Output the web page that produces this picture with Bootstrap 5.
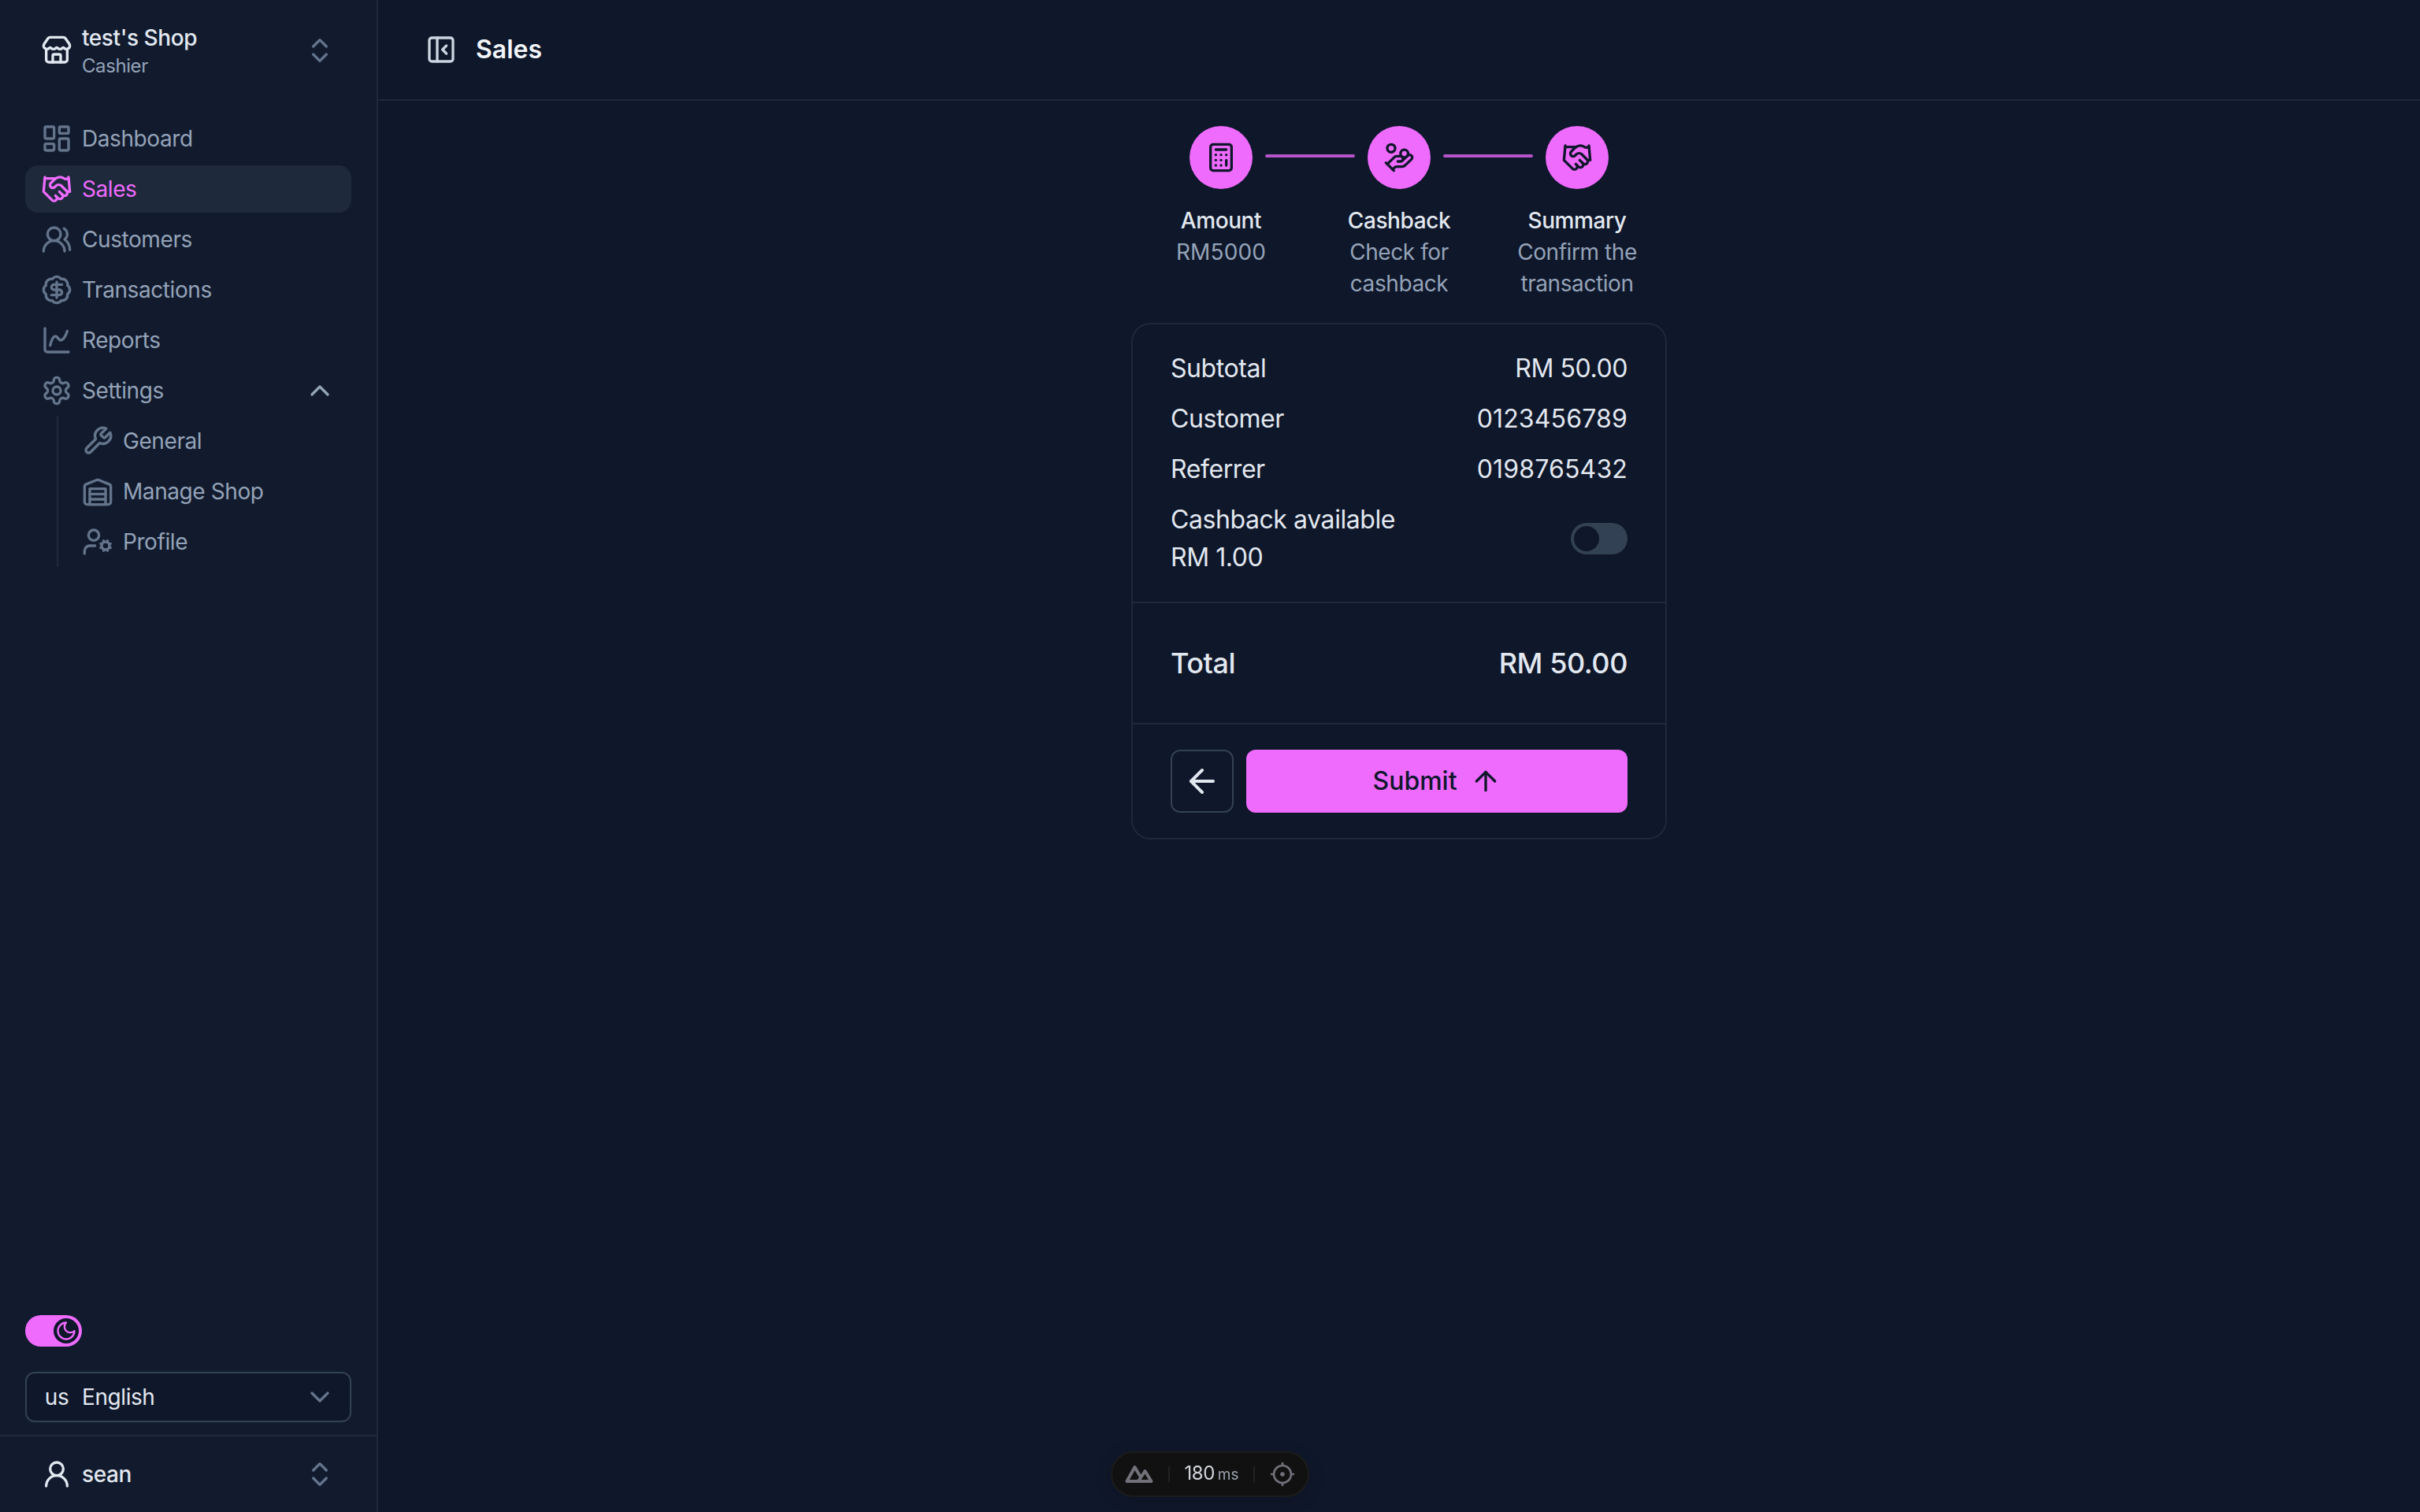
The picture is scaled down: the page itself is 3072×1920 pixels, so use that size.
<!DOCTYPE html>
<html lang="en">
<head>
  <meta charset="UTF-8">
  <title>Sales</title>
  <link href="https://cdn.jsdelivr.net/npm/bootstrap@5.3.0/dist/css/bootstrap.min.css" rel="stylesheet">
  <style>
    html, body { height: 100%; }
    body { background: #0f172a; color: #e2e8f0; font-family: "Inter", "Liberation Sans", sans-serif; font-size: 28px; line-height: 40px; letter-spacing: -.015em; overflow: hidden; }
    .ico { width: 40px; height: 40px; flex: none; fill: none; stroke: currentColor; stroke-width: 2; stroke-linecap: round; stroke-linejoin: round; }
    .ico-48 { width: 48px; height: 48px; }
    .ico-28 { width: 28px; height: 28px; }
    .num-wide { letter-spacing: .005em; }

    .side-bar { width: 480px; flex: none; background: #121b2e; border-right: 2px solid #1e293b; }
    .shop-head { height: 128px; padding: 0 20px 0 52px; margin-bottom: 18px; }
    .shop-name { font-weight: 500; line-height: 40px; color: #e2e8f0; }
    .shop-role { font-size: 24px; line-height: 32px; color: #94a3b8; }
    .shop-text { margin-top: -1px; }
    .shop-caret { margin-right: 32px; }
    .side-list { padding: 0 32px; gap: 4px; }
    .side-link { height: 60px; padding: 0 20px 0 20px; gap: 12px; color: #94a3b8; border-radius: 16px; text-decoration: none; }
    .side-link .ico { color: #64748b; }
    .side-link.on { background: #1e293b; color: #ee6bfd; }
    .side-link.on .ico { color: #ee6bfd; }
    .side-link .ico.chev { color: #94a3b8; }
    .sub-list { margin: -2px 0 0 40px; padding: 2px 0; border-left: 2px solid #1e293b; gap: 4px; }
    .sub-list .side-link { padding-left: 30px; }
    .chev-dim { color: #64748b; }

    .theme-pill { width: 72px; height: 40px; background: #ee6bfd; border-radius: 20px; padding: 4px; margin: 0 32px 32px; justify-content: flex-end; }
    .theme-knob { width: 32px; height: 32px; border-radius: 50%; background: #0f172a; color: #ee6bfd; }
    .lang-pick { height: 64px; margin: 0 32px 16px; padding: 0 18px 0 18px; gap: 12px; background: #0f172a; border: 2px solid #334155; border-radius: 12px; color: #e2e8f0; }
    .lang-flag { width: 40px; text-align: center; }
    .user-row { height: 98px; padding: 0 52px 0 52px; gap: 12px; border-top: 2px solid #1e293b; font-weight: 500; color: #e2e8f0; }

    .top-bar { height: 128px; padding-left: 60px; gap: 24px; border-bottom: 2px solid #1e293b; font-size: 32px; font-weight: 600; color: #f1f5f9; flex: none; letter-spacing: 0; }
    .top-bar .ico { color: #cbd5e1; }

    .sale-col { width: 680px; padding-top: 32px; }
    .step-dots { padding: 0 74px; }
    .step-dot { width: 80px; height: 80px; flex: none; border-radius: 50%; background: #ee6bfd; color: #0f172a; }
    .step-line { flex: 1 1 0; height: 4px; margin: 0 16px 4px; border-radius: 2px; background: #b654cc; }
    .step-labels { margin-top: 20px; margin-bottom: 30px; text-align: center; display: grid; grid-template-columns: repeat(3, 226px); justify-content: center; }
    .step-labels b { display: block; font-weight: 500; color: #e2e8f0; }
    .step-labels span { display: block; color: #94a3b8; padding: 0 24px; }

    .sale-card { background: transparent; border: 2px solid #1e293b; border-radius: 24px; font-size: 32px; line-height: 48px; color: #e2e8f0; }
    .sale-rows { padding: 32px 48px; gap: 16px; }
    .sale-total { padding: 48px; border-top: 2px solid #1e293b; border-bottom: 2px solid #1e293b; font-size: 36px; line-height: 56px; font-weight: 500; }
    .sale-actions { padding: 32px 48px; gap: 16px; }
    .cash-switch { width: 72px; height: 40px; padding: 4px; background: #334155; border-radius: 20px; }
    .cash-switch i { display: block; width: 32px; height: 32px; border-radius: 50%; background: #0f172a; }
    .back-btn { width: 80px; height: 80px; padding: 0; border: 2px solid #334155; border-radius: 12px; color: #e2e8f0; background: transparent; }
    .submit-btn { height: 80px; gap: 16px; border: 0; border-radius: 12px; background: #ee6bfd; color: #0f172a; font-size: 32px; font-weight: 500; letter-spacing: 0; }

    .dev-pill { position: fixed; left: 1410px; bottom: 19px; width: 252px; height: 58px; background: #111; border: 2px solid #1c1c1c; border-radius: 29px; color: #d1d5db; box-shadow: 0 4px 20px rgba(0,0,0,.15); }
    .dev-sep { width: 2px; height: 20px; background: #232323; }
    .dev-time { font-size: 24px; letter-spacing: -.5px; }
    .dev-time small { font-size: 19px; color: #9ca3af; margin-left: 4px; letter-spacing: 0; }
  </style>
</head>
<body class="d-flex">
  <svg class="d-none">
    <symbol id="store" viewBox="0 0 24 24"><path d="M15 21v-5a1 1 0 0 0-1-1h-4a1 1 0 0 0-1 1v5"/><path d="M17.774 10.31a1.12 1.12 0 0 0-1.549 0 2.5 2.5 0 0 1-3.451 0 1.12 1.12 0 0 0-1.548 0 2.5 2.5 0 0 1-3.452 0 1.12 1.12 0 0 0-1.549 0 2.5 2.5 0 0 1-3.77-3.248l2.889-4.184A2 2 0 0 1 7 2h10a2 2 0 0 1 1.653.873l2.895 4.192a2.5 2.5 0 0 1-3.774 3.244"/><path d="M4 10.95V19a2 2 0 0 0 2 2h12a2 2 0 0 0 2-2v-8.05"/></symbol>
    <symbol id="updown" viewBox="0 0 24 24"><path d="m7 15 5 5 5-5"/><path d="m7 9 5-5 5 5"/></symbol>
    <symbol id="dash" viewBox="0 0 24 24"><rect width="7" height="9" x="3" y="3" rx="1"/><rect width="7" height="5" x="14" y="3" rx="1"/><rect width="7" height="9" x="14" y="12" rx="1"/><rect width="7" height="5" x="3" y="16" rx="1"/></symbol>
    <symbol id="hands" viewBox="0 0 24 24"><path d="m11 17 2 2a1 1 0 1 0 3-3"/><path d="m14 14 2.5 2.5a1 1 0 1 0 3-3l-3.88-3.88a3 3 0 0 0-4.24 0l-.88.88a1 1 0 1 1-3-3l2.81-2.81a5.79 5.79 0 0 1 7.06-.87l.47.28a2 2 0 0 0 1.42.25L21 4"/><path d="m21 3 1 11h-2"/><path d="M3 3 2 14l6.5 6.5a1 1 0 1 0 3-3"/><path d="M3 4h8"/></symbol>
    <symbol id="users" viewBox="0 0 24 24"><path d="M18 21a8 8 0 0 0-16 0"/><circle cx="10" cy="8" r="5"/><path d="M22 20c0-3.37-2-6.5-4-8a5 5 0 0 0-.45-8.3"/></symbol>
    <symbol id="badge" viewBox="0 0 24 24"><path d="M3.85 8.62a4 4 0 0 1 4.78-4.77 4 4 0 0 1 6.74 0 4 4 0 0 1 4.78 4.78 4 4 0 0 1 0 6.74 4 4 0 0 1-4.77 4.78 4 4 0 0 1-6.75 0 4 4 0 0 1-4.78-4.77 4 4 0 0 1 0-6.76Z"/><path d="M16 8h-6a2 2 0 1 0 0 4h4a2 2 0 1 1 0 4H8"/><path d="M12 18V6"/></symbol>
    <symbol id="spline" viewBox="0 0 24 24"><path d="M3 3v16a2 2 0 0 0 2 2h16"/><path d="M7 16c.5-2 1.5-7 4-7 2 0 2 3 4 3 2.5 0 4.5-5 5-7"/></symbol>
    <symbol id="gear" viewBox="0 0 24 24"><path d="M12.22 2h-.44a2 2 0 0 0-2 2v.18a2 2 0 0 1-1 1.73l-.43.25a2 2 0 0 1-2 0l-.15-.08a2 2 0 0 0-2.73.73l-.22.38a2 2 0 0 0 .73 2.73l.15.1a2 2 0 0 1 1 1.72v.51a2 2 0 0 1-1 1.74l-.15.09a2 2 0 0 0-.73 2.73l.22.38a2 2 0 0 0 2.73.73l.15-.08a2 2 0 0 1 2 0l.43.25a2 2 0 0 1 1 1.73V20a2 2 0 0 0 2 2h.44a2 2 0 0 0 2-2v-.18a2 2 0 0 1 1-1.73l.43-.25a2 2 0 0 1 2 0l.15.08a2 2 0 0 0 2.73-.73l.22-.39a2 2 0 0 0-.73-2.73l-.15-.08a2 2 0 0 1-1-1.74v-.5a2 2 0 0 1 1-1.74l.15-.09a2 2 0 0 0 .73-2.73l-.22-.38a2 2 0 0 0-2.73-.73l-.15.08a2 2 0 0 1-2 0l-.43-.25a2 2 0 0 1-1-1.73V4a2 2 0 0 0-2-2z"/><circle cx="12" cy="12" r="3"/></symbol>
    <symbol id="up" viewBox="0 0 24 24"><path d="m18 15-6-6-6 6"/></symbol>
    <symbol id="down" viewBox="0 0 24 24"><path d="m6 9 6 6 6-6"/></symbol>
    <symbol id="wrench" viewBox="0 0 24 24"><path d="M14.7 6.3a1 1 0 0 0 0 1.4l1.6 1.6a1 1 0 0 0 1.4 0l3.77-3.77a6 6 0 0 1-7.94 7.94l-6.91 6.91a2.12 2.12 0 0 1-3-3l6.91-6.91a6 6 0 0 1 7.94-7.94l-3.76 3.76z"/></symbol>
    <symbol id="warehouse" viewBox="0 0 24 24"><path d="M22 8.35V20a2 2 0 0 1-2 2H4a2 2 0 0 1-2-2V8.35A2 2 0 0 1 3.26 6.5l8-3.2a2 2 0 0 1 1.48 0l8 3.2A2 2 0 0 1 22 8.35Z"/><path d="M6 18h12"/><path d="M6 14h12"/><rect width="12" height="12" x="6" y="10"/></symbol>
    <symbol id="usercog" viewBox="0 0 24 24"><path d="M10 15H6a4 4 0 0 0-4 4v2"/><path d="m14.305 16.53.923-.382"/><path d="m15.228 13.852-.923-.383"/><path d="m16.852 12.228-.383-.923"/><path d="m16.852 17.772-.383.924"/><path d="m19.148 12.228.383-.923"/><path d="m19.53 18.696-.382-.924"/><path d="m20.772 13.852.924-.383"/><path d="m20.772 16.148.924.383"/><circle cx="18" cy="15" r="3"/><circle cx="9" cy="7" r="4"/></symbol>
    <symbol id="moon" viewBox="0 0 24 24"><path d="M12 3a6 6 0 0 0 9 9 9 9 0 1 1-9-9Z"/></symbol>
    <symbol id="user" viewBox="0 0 24 24"><circle cx="12" cy="8" r="5"/><path d="M20 21a8 8 0 0 0-16 0"/></symbol>
    <symbol id="panel" viewBox="0 0 24 24"><rect width="18" height="18" x="3" y="3" rx="2"/><path d="M9 3v18"/><path d="m16 15-3-3 3-3"/></symbol>
    <symbol id="calc" viewBox="0 0 24 24"><rect width="16" height="20" x="4" y="2" rx="2"/><path d="M8 6h8"/><path d="M16 14v4"/><path d="M16 10h.01"/><path d="M12 10h.01"/><path d="M8 10h.01"/><path d="M12 14h.01"/><path d="M8 14h.01"/><path d="M12 18h.01"/><path d="M8 18h.01"/></symbol>
    <symbol id="coins" viewBox="0 0 24 24"><path d="M11 15h2a2 2 0 1 0 0-4h-3c-.6 0-1.1.2-1.4.6L3 17"/><path d="m7 21 1.6-1.4c.3-.4.8-.6 1.4-.6h4c1.1 0 2.1-.4 2.8-1.2l4.6-4.4a2 2 0 0 0-2.75-2.91l-4.2 3.9"/><path d="m2 16 6 6"/><circle cx="16" cy="9" r="2.9"/><circle cx="6" cy="5" r="3"/></symbol>
    <symbol id="left" viewBox="0 0 24 24"><path d="m12 19-7-7 7-7"/><path d="M19 12H5"/></symbol>
    <symbol id="arrowup" viewBox="0 0 24 24"><path d="m5 12 7-7 7 7"/><path d="M12 19V5"/></symbol>
  </svg>

  <aside class="side-bar d-flex flex-column">
    <div class="shop-head d-flex align-items-center justify-content-between">
      <div class="d-flex align-items-center gap-2">
        <svg class="ico me-1"><use href="#store"/></svg>
        <div class="shop-text">
          <div class="shop-name">test's Shop</div>
          <div class="shop-role">Cashier</div>
        </div>
      </div>
      <svg class="ico chev-dim shop-caret"><use href="#updown"/></svg>
    </div>

    <nav class="side-list d-flex flex-column">
      <a class="side-link d-flex align-items-center" href="#"><svg class="ico"><use href="#dash"/></svg>Dashboard</a>
      <a class="side-link on d-flex align-items-center" href="#"><svg class="ico"><use href="#hands"/></svg>Sales</a>
      <a class="side-link d-flex align-items-center" href="#"><svg class="ico"><use href="#users"/></svg>Customers</a>
      <a class="side-link d-flex align-items-center" href="#"><svg class="ico"><use href="#badge"/></svg>Transactions</a>
      <a class="side-link d-flex align-items-center" href="#"><svg class="ico"><use href="#spline"/></svg>Reports</a>
      <a class="side-link d-flex align-items-center" href="#"><svg class="ico"><use href="#gear"/></svg>Settings<svg class="ico chev ms-auto"><use href="#up"/></svg></a>
      <div class="sub-list d-flex flex-column">
        <a class="side-link d-flex align-items-center" href="#"><svg class="ico"><use href="#wrench"/></svg>General</a>
        <a class="side-link d-flex align-items-center" href="#"><svg class="ico"><use href="#warehouse"/></svg>Manage Shop</a>
        <a class="side-link d-flex align-items-center" href="#"><svg class="ico"><use href="#usercog"/></svg>Profile</a>
      </div>
    </nav>

    <div class="mt-auto">
      <div class="theme-pill d-flex">
        <div class="theme-knob d-flex align-items-center justify-content-center"><svg class="ico ico-28"><use href="#moon"/></svg></div>
      </div>
      <div class="lang-pick d-flex align-items-center">
        <span class="lang-flag">us</span>
        <span>English</span>
        <svg class="ico chev-dim ms-auto"><use href="#down"/></svg>
      </div>
      <div class="user-row d-flex align-items-center">
        <svg class="ico"><use href="#user"/></svg>
        <span>sean</span>
        <svg class="ico chev-dim ms-auto"><use href="#updown"/></svg>
      </div>
    </div>
  </aside>

  <main class="flex-grow-1 d-flex flex-column">
    <header class="top-bar d-flex align-items-center">
      <svg class="ico"><use href="#panel"/></svg>
      <span>Sales</span>
    </header>

    <div class="sale-col mx-auto">
      <div class="step-dots d-flex align-items-center">
        <div class="step-dot d-flex align-items-center justify-content-center"><svg class="ico"><use href="#calc"/></svg></div>
        <div class="step-line"></div>
        <div class="step-dot d-flex align-items-center justify-content-center"><svg class="ico"><use href="#coins"/></svg></div>
        <div class="step-line"></div>
        <div class="step-dot d-flex align-items-center justify-content-center"><svg class="ico"><use href="#hands"/></svg></div>
      </div>
      <div class="step-labels">
        <div><b>Amount</b><span class="num-wide">RM5000</span></div>
        <div><b>Cashback</b><span>Check for cashback</span></div>
        <div><b>Summary</b><span>Confirm the transaction</span></div>
      </div>

      <div class="card sale-card">
        <div class="sale-rows d-flex flex-column">
          <div class="d-flex justify-content-between"><span>Subtotal</span><span>RM 50.00</span></div>
          <div class="d-flex justify-content-between"><span>Customer</span><span class="num-wide">0123456789</span></div>
          <div class="d-flex justify-content-between"><span>Referrer</span><span class="num-wide">0198765432</span></div>
          <div class="d-flex justify-content-between align-items-center">
            <div>Cashback available<br>RM 1.00</div>
            <div class="cash-switch"><i></i></div>
          </div>
        </div>
        <div class="sale-total d-flex justify-content-between"><span>Total</span><span>RM 50.00</span></div>
        <div class="sale-actions d-flex">
          <button class="btn back-btn d-flex align-items-center justify-content-center"><svg class="ico ico-48"><use href="#left"/></svg></button>
          <button class="btn submit-btn flex-grow-1 d-flex align-items-center justify-content-center">Submit<svg class="ico"><use href="#arrowup"/></svg></button>
        </div>
      </div>
    </div>
  </main>

  <div class="dev-pill d-flex align-items-center justify-content-between px-3">
    <svg width="36" height="24" viewBox="0 0 36 24" fill="none" stroke="#71717a" stroke-width="4" stroke-linejoin="round" stroke-linecap="round"><path d="M13 21H2.5L12.5 3 19 14"/><path d="M13 21h20.5L25.5 8 17 21"/></svg>
    <div class="dev-sep"></div>
    <div class="dev-time">180<small>ms</small></div>
    <div class="dev-sep"></div>
    <svg width="32" height="32" viewBox="0 0 32 32" fill="none" stroke="#71717a" stroke-width="2.6"><circle cx="16" cy="16" r="11"/><path d="M16 1v5M16 26v5M1 16h5M26 16h5"/><circle cx="16" cy="16" r="1.5" fill="#71717a"/></svg>
  </div>
</body>
</html>
